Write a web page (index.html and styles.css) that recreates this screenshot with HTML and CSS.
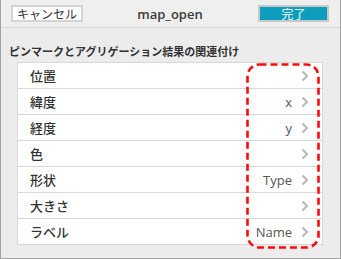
FILE: index.html
```html
<!DOCTYPE html>
<html lang="ja">
<head>
<meta charset="utf-8">
<link rel="stylesheet" href="styles.css">
</head>
<body>
<div class="frame">
  <div class="header">
    <div class="left"><button class="btn cancel">キャンセル</button></div>
    <div class="title">map_open</div>
    <div class="right"><button class="btn done">完了</button></div>
  </div>
  <div class="body">
    <div class="section">ピンマークとアグリゲーション結果の関連付け</div>
    <ul class="list">
      <li class="row"><span class="label">位置</span><span class="value"></span><svg class="chev" viewBox="0 0 8 12"><polyline points="1.5,1.5 6,6 1.5,10.5"/></svg></li>
      <li class="row"><span class="label">緯度</span><span class="value">x</span><svg class="chev" viewBox="0 0 8 12"><polyline points="1.5,1.5 6,6 1.5,10.5"/></svg></li>
      <li class="row"><span class="label">経度</span><span class="value">y</span><svg class="chev" viewBox="0 0 8 12"><polyline points="1.5,1.5 6,6 1.5,10.5"/></svg></li>
      <li class="row"><span class="label">色</span><span class="value"></span><svg class="chev" viewBox="0 0 8 12"><polyline points="1.5,1.5 6,6 1.5,10.5"/></svg></li>
      <li class="row"><span class="label">形状</span><span class="value">Type</span><svg class="chev" viewBox="0 0 8 12"><polyline points="1.5,1.5 6,6 1.5,10.5"/></svg></li>
      <li class="row"><span class="label">大きさ</span><span class="value"></span><svg class="chev" viewBox="0 0 8 12"><polyline points="1.5,1.5 6,6 1.5,10.5"/></svg></li>
      <li class="row"><span class="label">ラベル</span><span class="value">Name</span><svg class="chev" viewBox="0 0 8 12"><polyline points="1.5,1.5 6,6 1.5,10.5"/></svg></li>
    </ul>
  </div>
  <svg class="highlight" viewBox="0 0 74 186"><rect x="1.5" y="1.5" width="71" height="183" rx="12" ry="12"/></svg>
</div>
</body>
</html>
```
FILE: styles.css
```css
* { box-sizing: border-box; }
html, body { margin: 0; padding: 0; background: #ececec; }
.frame {
  position: relative;
  width: 341px;
  height: 259px;
  background: #ececec;
  border: 1px solid #a3a3a3;
  border-top: none;
  font-family: "Open Sans", "Noto Sans CJK JP", sans-serif;
  color: #333;
}
.header {
  height: 28px;
  display: grid;
  grid-template-columns: 1fr auto 1fr;
  align-items: center;
  padding: 0 11px 0 10px;
  border-bottom: 1px solid #d6d6d6;
  background: #efefef;
}
.left { display: flex; justify-content: flex-start; }
.right { display: flex; justify-content: flex-end; }
.btn {
  height: 17px;
  padding: 0;
  font-family: "Noto Sans CJK JP", sans-serif;
  font-size: 12px;
  line-height: 13px;
  border: 2px solid #d4d4d4;
}
.cancel { width: 72px; background: #fff; color: #333; }
.done { width: 71px; background: #0e9dbd; color: #fff; border-color: #c8c8c8; }
.title {
  font-family: "Open Sans", sans-serif;
  font-weight: 600;
  font-size: 13px;
  color: #3a3a3a;
}
.body { padding: 16px 17px 0 16px; }
.section {
  font-family: "Noto Sans CJK JP", sans-serif;
  font-weight: 700;
  font-size: 11px;
  line-height: 14px;
  margin-left: -8px;
  height: 18px;
  color: #333;
}
.list {
  list-style: none;
  margin: 0;
  padding: 0;
  background: #fff;
  border: 1px solid #d8d8d8;
  border-bottom: none;
}
.row {
  height: 26px;
  display: flex;
  align-items: center;
  padding: 0 13px 0 12px;
  border-bottom: 1px solid #d8d8d8;
}
.label {
  flex: 1;
  font-family: "Noto Sans CJK JP", sans-serif;
  font-weight: 500;
  font-size: 13px;
  color: #333;
}
.value {
  font-family: "Open Sans", sans-serif;
  font-size: 13px;
  color: #555;
  margin-right: 9px;
}
.chev { width: 8px; height: 12px; }
.chev polyline { fill: none; stroke: #b8b8b8; stroke-width: 2; }
.highlight {
  position: absolute;
  left: 245px;
  top: 63px;
  width: 74px;
  height: 186px;
}
.highlight rect {
  fill: none;
  stroke: #ff0a0a;
  stroke-width: 2.6;
  stroke-dasharray: 7 4;
}
```
